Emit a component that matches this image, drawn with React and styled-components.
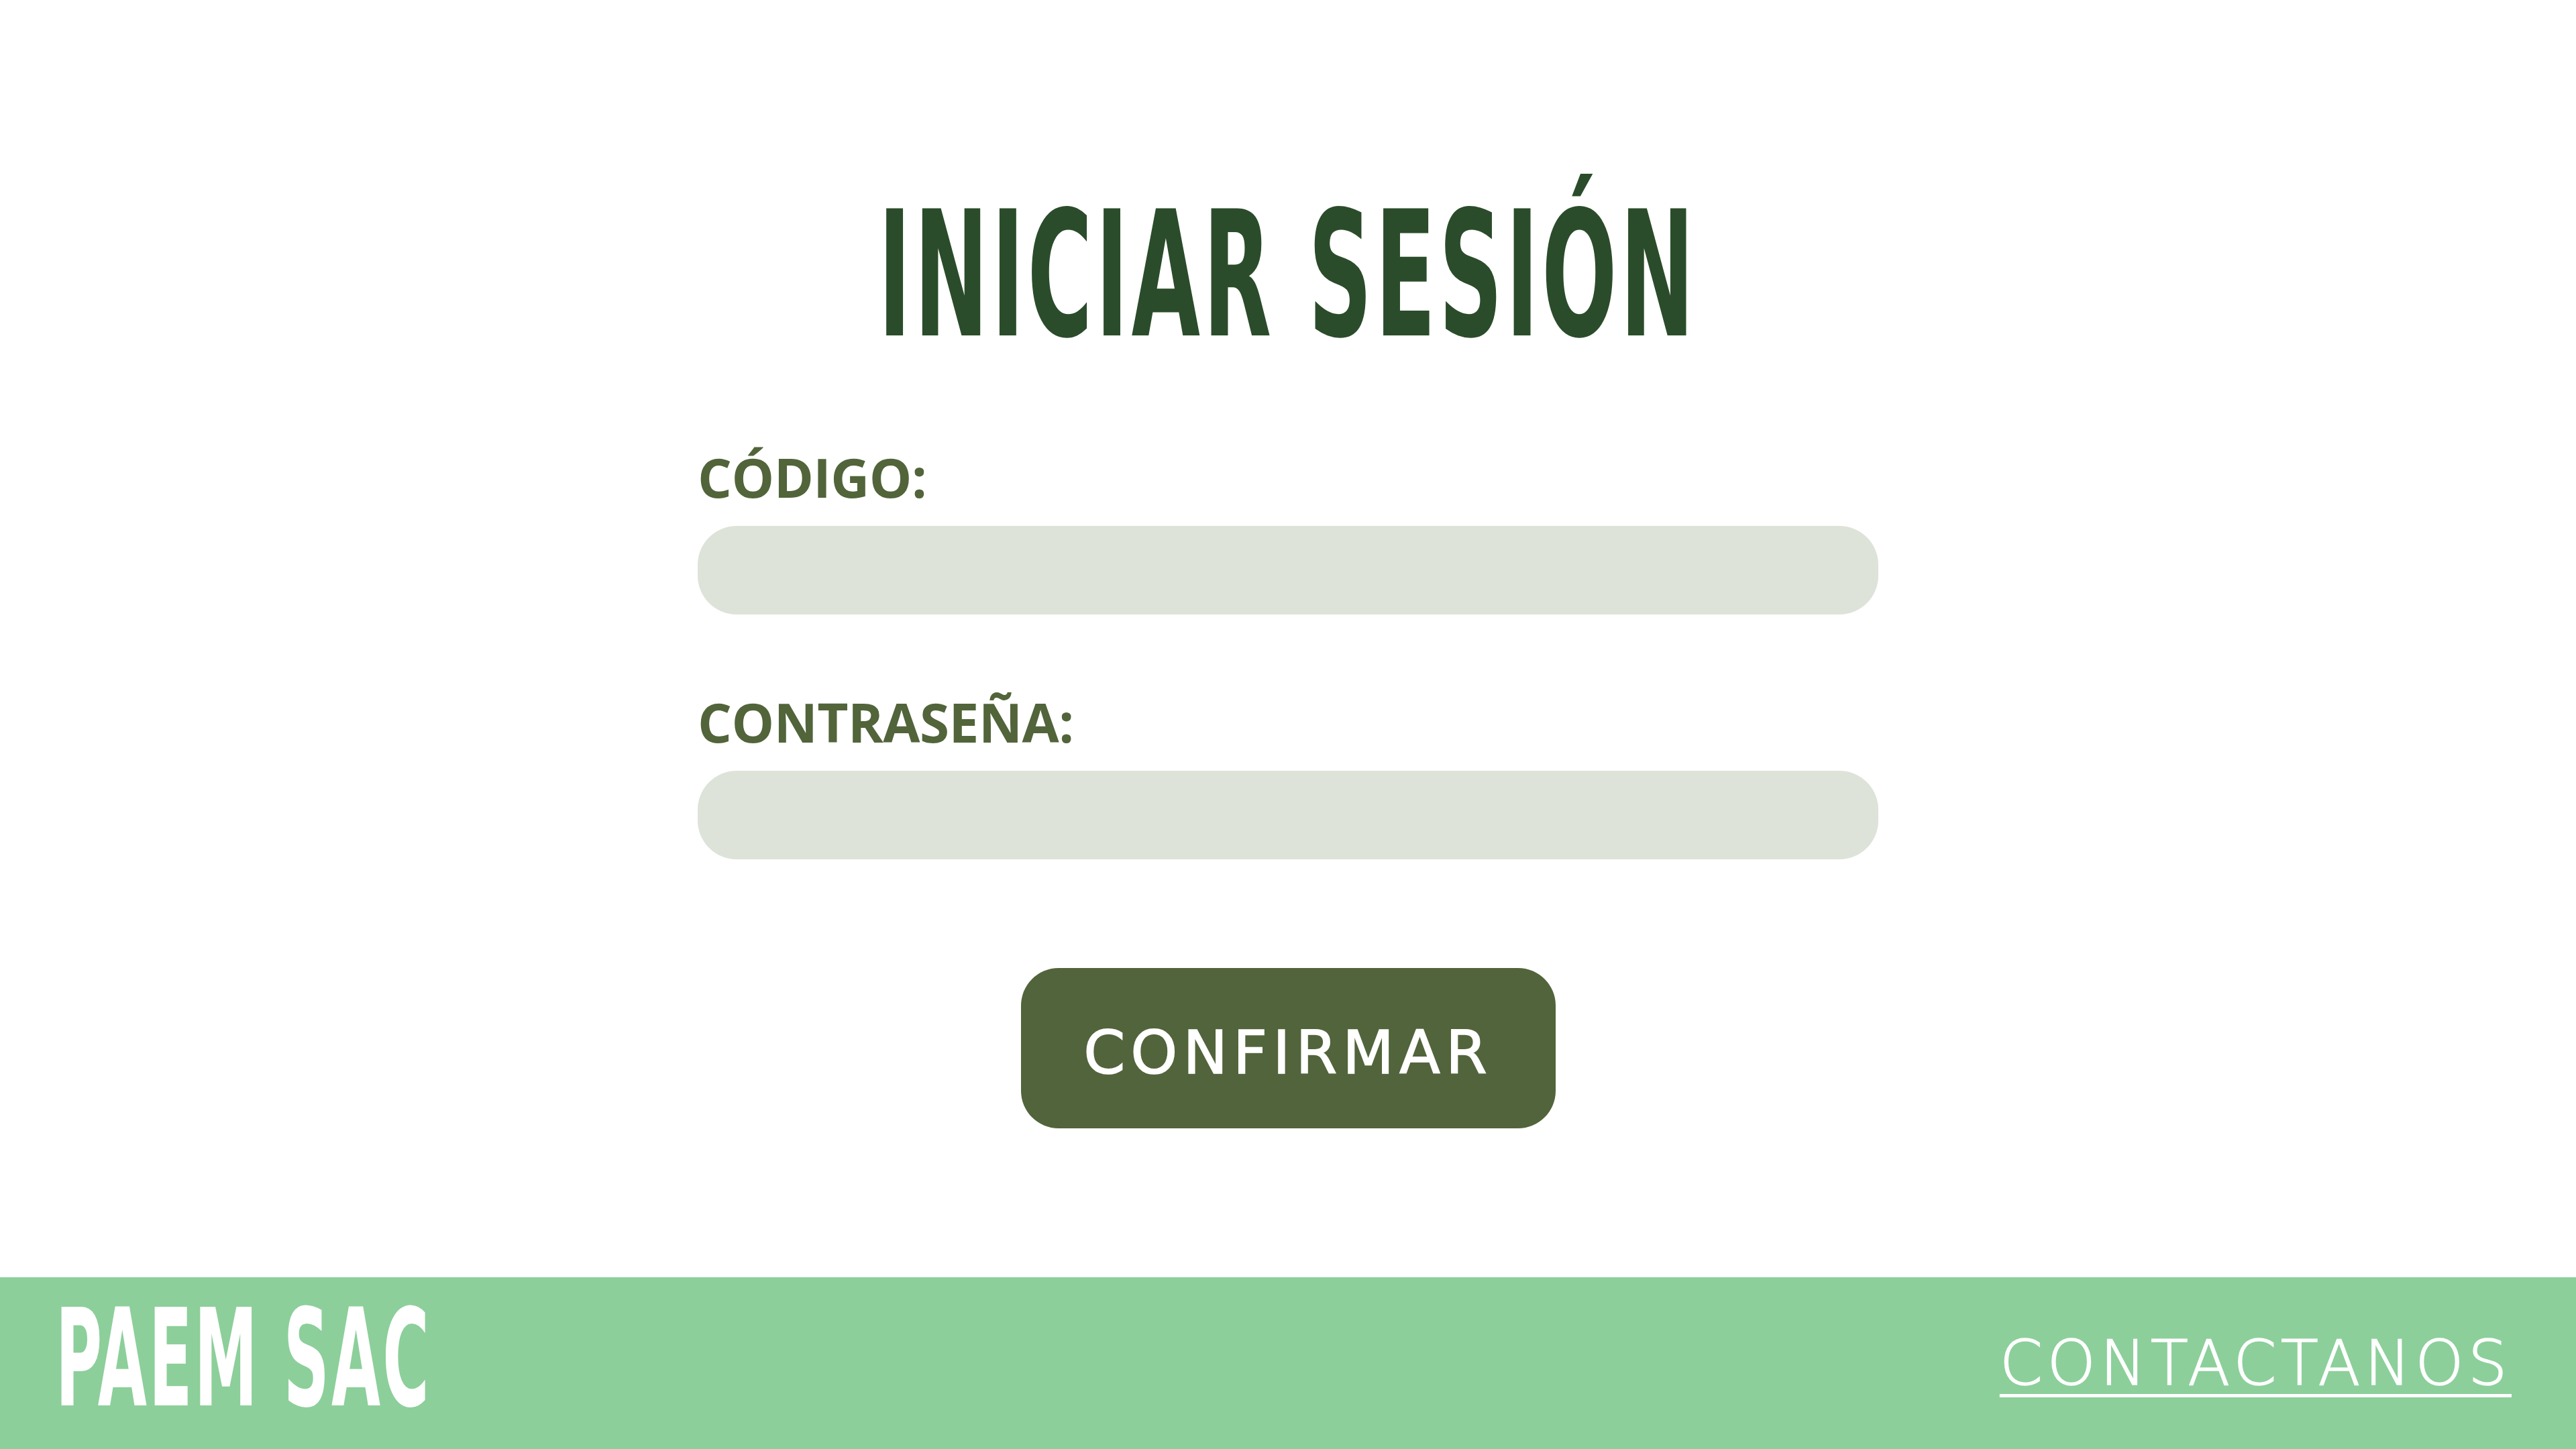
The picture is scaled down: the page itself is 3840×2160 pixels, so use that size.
import styled, { createGlobalStyle } from 'styled-components';

const GlobalStyle = createGlobalStyle`
  html, body {
    margin: 0;
    padding: 0;
    background: #ffffff;
  }
  body {
    font-family: "Open Sans", "Liberation Sans", sans-serif;
  }
`;

const Page = styled.div`
  display: flex;
  flex-direction: column;
  min-height: 100vh;
  width: 100%;
`;

const Main = styled.main`
  flex: 1;
  display: flex;
  flex-direction: column;
  align-items: center;
  padding-top: 280px;
`;

const Title = styled.h1`
  margin: 0;
  display: inline-block;
  font-family: "DejaVu Sans Condensed", "DejaVu Sans", sans-serif;
  font-weight: 700;
  font-size: 260px;
  line-height: 260px;
  color: #2b4c2b;
  letter-spacing: 8px;
  transform: scaleX(0.565);
  transform-origin: center;
  white-space: nowrap;
`;

const LoginForm = styled.form`
  width: 1760px;
  display: flex;
  flex-direction: column;
  margin-top: 131px;
`;

const FormGroup = styled.div`
  display: flex;
  flex-direction: column;
  gap: 33px;
  margin-bottom: ${(p) => p.$space || 0}px;
`;

const FieldLabel = styled.label`
  font-family: "Open Sans", "Noto Sans", sans-serif;
  font-weight: 700;
  font-size: 80px;
  line-height: 80px;
  letter-spacing: -0.5px;
  color: #52643a;
`;

const FieldInput = styled.input`
  box-sizing: border-box;
  height: 132px;
  width: 100%;
  border: none;
  outline: none;
  border-radius: 58px;
  background: #dde3d8;
  padding: 0 60px;
  font-size: 60px;
  color: #2b4c2b;
`;

const BtnRow = styled.div`
  display: flex;
  justify-content: center;
  margin-top: 162px;
`;

const ConfirmButton = styled.button`
  width: 797px;
  height: 239px;
  border: none;
  border-radius: 56px;
  background: #52643b;
  color: #ffffff;
  font-family: "DejaVu Sans", sans-serif;
  font-weight: 400;
  font-size: 89px;
  letter-spacing: 8px;
  -webkit-text-stroke: 1.5px #ffffff;
  padding: 12px 0 0 0;
  cursor: pointer;
`;

const Footer = styled.footer`
  height: 256px;
  background: #8ccf9a;
  display: flex;
  align-items: center;
  justify-content: space-between;
  padding: 0 96px 0 83px;
`;

const Brand = styled.div`
  font-family: "DejaVu Sans Condensed", "DejaVu Sans", sans-serif;
  font-weight: 700;
  font-size: 202px;
  line-height: 202px;
  color: #ffffff;
  letter-spacing: 6px;
  transform: scaleX(0.52);
  transform-origin: left center;
  white-space: nowrap;
  margin-top: -14px;
`;

const ContactLink = styled.a`
  font-family: "DejaVu Sans", sans-serif;
  font-weight: 200;
  font-size: 92px;
  letter-spacing: 6.5px;
  color: #ffffff;
  -webkit-text-stroke: 1.5px #ffffff;
  text-decoration: underline;
  text-decoration-thickness: 5px;
  text-underline-offset: 14px;
  cursor: pointer;
`;

export default function App() {
  return (
    <Page>
      <GlobalStyle />
      <Main>
        <Title>INICIAR SESIÓN</Title>
        <LoginForm onSubmit={(e) => e.preventDefault()}>
          <FormGroup $space={120}>
            <FieldLabel htmlFor="codigo">CÓDIGO:</FieldLabel>
            <FieldInput type="text" id="codigo" name="codigo" />
          </FormGroup>
          <FormGroup>
            <FieldLabel htmlFor="password">CONTRASEÑA:</FieldLabel>
            <FieldInput type="password" id="password" name="password" />
          </FormGroup>
          <BtnRow>
            <ConfirmButton type="submit">CONFIRMAR</ConfirmButton>
          </BtnRow>
        </LoginForm>
      </Main>
      <Footer>
        <Brand>PAEM SAC</Brand>
        <ContactLink>CONTACTANOS</ContactLink>
      </Footer>
    </Page>
  );
}
